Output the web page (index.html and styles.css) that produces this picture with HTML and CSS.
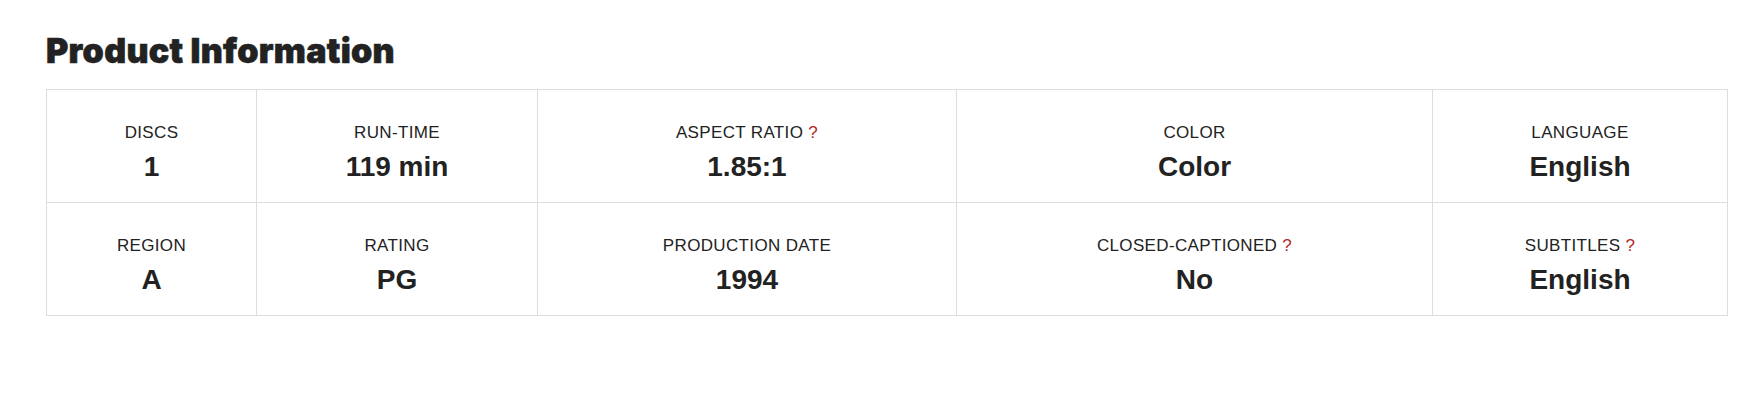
FILE: index.html
```html
<!DOCTYPE html>
<html lang="en">
<head>
<meta charset="utf-8">
<title>Product Information</title>
<link rel="stylesheet" href="styles.css">
</head>
<body>
<section class="product-info">
  <h2 class="title">Product Information</h2>
  <div class="spec-grid">
    <div class="cell"><div class="label">DISCS</div><div class="value">1</div></div>
    <div class="cell"><div class="label">RUN-TIME</div><div class="value">119 min</div></div>
    <div class="cell"><div class="label">ASPECT RATIO <span class="help">?</span></div><div class="value">1.85:1</div></div>
    <div class="cell"><div class="label">COLOR</div><div class="value">Color</div></div>
    <div class="cell"><div class="label">LANGUAGE</div><div class="value">English</div></div>
    <div class="cell"><div class="label">REGION</div><div class="value">A</div></div>
    <div class="cell"><div class="label">RATING</div><div class="value">PG</div></div>
    <div class="cell"><div class="label">PRODUCTION DATE</div><div class="value">1994</div></div>
    <div class="cell"><div class="label">CLOSED-CAPTIONED <span class="help">?</span></div><div class="value">No</div></div>
    <div class="cell"><div class="label">SUBTITLES <span class="help">?</span></div><div class="value">English</div></div>
  </div>
</section>
</body>
</html>
```
FILE: styles.css
```css
html, body {
  margin: 0;
  padding: 0;
  background: #fff;
}
body {
  font-family: "Liberation Sans", Arial, sans-serif;
  color: #222;
}
.product-info {
  padding: 31px 0 0 46px;
}
.title {
  margin: 0 0 18px 0;
  font-family: Inter, "Liberation Sans", sans-serif;
  font-weight: 900;
  font-size: 34px;
  line-height: 40px;
  color: #222;
  letter-spacing: 0.3px;
  -webkit-text-stroke: 0.6px #222;
}
.spec-grid {
  display: grid;
  grid-template-columns: 210px 281px 419px 476px 295px;
  width: max-content;
  border-left: 1px solid #ddd;
  border-top: 1px solid #ddd;
}
.cell {
  box-sizing: border-box;
  border-right: 1px solid #ddd;
  border-bottom: 1px solid #ddd;
  padding: 33px 8px 19px;
  text-align: center;
  display: flex;
  flex-direction: column;
  align-items: center;
  gap: 8px;
}
.label {
  font-size: 17px;
  line-height: 20px;
  letter-spacing: 0.35px;
  color: #222;
}
.help {
  color: #b3262a;
}
.value {
  font-size: 28px;
  line-height: 32px;
  font-weight: 700;
  color: #222;
}
```
